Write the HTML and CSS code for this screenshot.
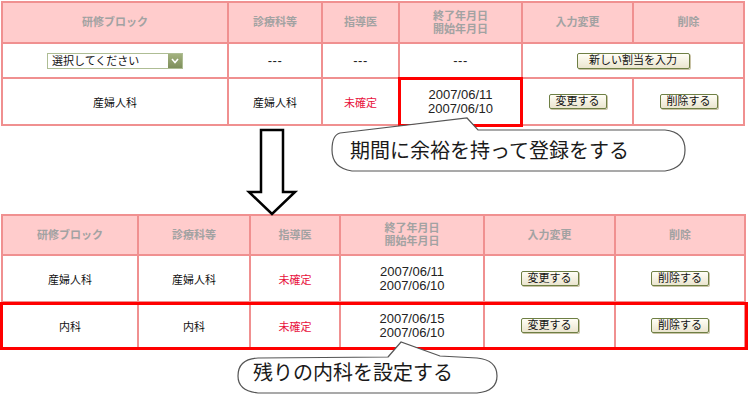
FILE: index.html
```html
<!DOCTYPE html>
<html lang="ja">
<head>
  <meta charset="UTF-8" />
  <title>研修ブロック割当</title>
  <link rel="stylesheet" href="styles.css">
</head>
<body>
  <div class="page">

    <table class="grid grid-top">
      <colgroup>
        <col style="width:226px"><col style="width:94px"><col style="width:77px">
        <col style="width:123px"><col style="width:111px"><col style="width:111px">
      </colgroup>
      <tr class="head">
        <th>研修ブロック</th>
        <th>診療科等</th>
        <th>指導医</th>
        <th>終了年月日<br>開始年月日</th>
        <th>入力変更</th>
        <th>削除</th>
      </tr>
      <tr class="new-row">
        <td>
          <div class="select">
            <select><option>選択してください</option></select>
            <span class="select-arrow">
              <svg width="8" height="6" viewBox="0 0 8 6"><path d="M1 1 L4 4.5 L7 1" fill="none" stroke="#fff" stroke-width="1.6"/></svg>
            </span>
          </div>
        </td>
        <td class="dash">---</td>
        <td class="dash">---</td>
        <td class="dash">---</td>
        <td colspan="2"><button class="btn btn-wide">新しい割当を入力</button></td>
      </tr>
      <tr class="row-tall">
        <td>産婦人科</td>
        <td>産婦人科</td>
        <td class="pending">未確定</td>
        <td class="date">2007/06/11<br>2007/06/10</td>
        <td><button class="btn">変更する</button></td>
        <td><button class="btn">削除する</button></td>
      </tr>
    </table>

    <div class="arrow-gap">
      <svg class="down-arrow" width="56" height="90" viewBox="0 0 56 90">
        <polygon points="17,4 39,4 39,66 51,66 28,88 5,66 17,66" fill="#fff" stroke="#000" stroke-width="2.5" stroke-linejoin="miter"/>
      </svg>
    </div>

    <table class="grid grid-bottom">
      <colgroup>
        <col style="width:136px"><col style="width:112px"><col style="width:90px">
        <col style="width:144px"><col style="width:131px"><col style="width:130px">
      </colgroup>
      <tr class="head head-low">
        <th>研修ブロック</th>
        <th>診療科等</th>
        <th>指導医</th>
        <th>終了年月日<br>開始年月日</th>
        <th>入力変更</th>
        <th>削除</th>
      </tr>
      <tr class="row-tall">
        <td>産婦人科</td>
        <td>産婦人科</td>
        <td class="pending">未確定</td>
        <td class="date">2007/06/11<br>2007/06/10</td>
        <td><button class="btn">変更する</button></td>
        <td><button class="btn">削除する</button></td>
      </tr>
      <tr class="row-tall">
        <td>内科</td>
        <td>内科</td>
        <td class="pending">未確定</td>
        <td class="date">2007/06/15<br>2007/06/10</td>
        <td><button class="btn">変更する</button></td>
        <td><button class="btn">削除する</button></td>
      </tr>
    </table>

    <!-- annotations -->
    <div class="mark mark-period"></div>
    <div class="mark mark-row"></div>

    <div class="callout callout-period">
      <svg class="bubble" width="358" height="58" viewBox="0 0 358 58">
        <path d="M10 17 L137 2 L148 14 L335 14 Q355 16 355 34 Q355 52 335 55 L22 55 Q2 52 2 34 Q2 19 10 17 Z" fill="#fff" stroke="#555" stroke-width="1.2"/>
      </svg>
      <span class="callout-text">期間に余裕を持って登録をする</span>
    </div>

    <div class="callout callout-rest">
      <svg class="bubble" width="264" height="58" viewBox="0 0 264 58">
        <path d="M152 19 L165 4 L204 18 L241 20 Q261 22 261 38 Q261 53 241 55 L22 55 Q2 53 2 38 Q2 21 22 20 Z" fill="#fff" stroke="#555" stroke-width="1.2"/>
      </svg>
      <span class="callout-text">残りの内科を設定する</span>
    </div>

  </div>
</body>
</html>
```

FILE: styles.css
```css
body {
  margin: 0;
  padding: 0;
  background: #fff;
  color: #111;
  font-family: "Liberation Sans", "Noto Sans CJK JP", sans-serif;
  font-size: 11px;
}

.page {
  position: relative;
  width: 750px;
  height: 397px;
  padding: 1px 0 0 1px;
  box-sizing: border-box;
}

.grid {
  border-collapse: collapse;
  table-layout: fixed;
  width: 743px;
}

.grid th,
.grid td {
  border: 2px solid #f09090;
  padding: 0;
  text-align: center;
  vertical-align: middle;
}

.grid th {
  background: #ffcccc;
  color: #a2a2a2;
  font-weight: bold;
  line-height: 13px;
}

.grid-top .head { height: 41px; }
.head-low { height: 40px; }

.new-row { height: 35px; }
.new-row td { background: #f5fff5; }

.row-tall { height: 47px; }

.grid td {
  background: #fff;
}

.dash {
  letter-spacing: 0.5px;
  font-size: 13px;
  color: #222;
}

.pending {
  color: #e8103c;
}

.date {
  font-size: 13px;
  line-height: 14px;
  color: #222;
}

.select {
  position: relative;
  display: inline-block;
  width: 136px;
  height: 16px;
  vertical-align: middle;
}

.select select {
  appearance: none;
  -webkit-appearance: none;
  width: 100%;
  height: 16px;
  margin: 0;
  padding: 0 0 0 4px;
  border: 1px solid #aebd94;
  border-radius: 0;
  background: #fff;
  font-family: inherit;
  font-size: 11px;
  color: #111;
  box-sizing: border-box;
}

.select-arrow {
  position: absolute;
  top: 1px;
  right: 1px;
  width: 14px;
  height: 14px;
  display: flex;
  align-items: center;
  justify-content: center;
  background: linear-gradient(#a3b27f, #7e8f5c);
  pointer-events: none;
}

.btn {
  height: 15px;
  padding: 0 6px;
  border: 1px solid #6e7f44;
  border-radius: 2px;
  background: linear-gradient(#fffef6, #ebe5cf);
  font-family: inherit;
  font-size: 11px;
  line-height: 13px;
  color: #111;
  box-shadow: 1px 1px 0 #c9c3a6;
}

.btn-wide {
  width: 113px;
  height: 16px;
}

.arrow-gap {
  height: 88px;
  padding-left: 243px;
}

.down-arrow {
  display: block;
}

.mark {
  position: absolute;
  border: 3px solid #ff0000;
  box-sizing: border-box;
}

.mark-period {
  left: 398px;
  top: 77px;
  width: 125px;
  height: 50px;
}

.mark-row {
  left: 0;
  top: 302px;
  width: 748px;
  height: 48px;
}

.callout {
  position: absolute;
}

.callout .bubble {
  position: absolute;
  left: 0;
  top: 0;
}

.callout-period {
  left: 330px;
  top: 116px;
  width: 358px;
  height: 58px;
}

.callout-rest {
  left: 236px;
  top: 338px;
  width: 264px;
  height: 58px;
}

.callout-text {
  position: relative;
  display: block;
  font-family: "Noto Sans CJK JP", sans-serif;
  font-size: 20px;
  line-height: 24px;
  color: #1a1a1a;
  white-space: nowrap;
}

.callout-period .callout-text {
  padding: 22px 0 0 20px;
}

.callout-rest .callout-text {
  padding: 22px 0 0 17px;
}
```
